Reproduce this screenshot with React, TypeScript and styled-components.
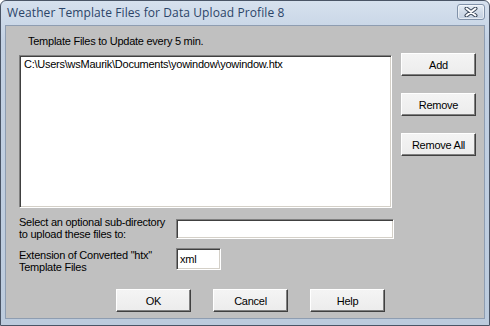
import React from 'react';
import styled, { createGlobalStyle } from 'styled-components';

const GlobalStyle = createGlobalStyle`
  html, body {
    margin: 0;
    padding: 0;
    background: #ffffff;
  }
`;

const Window = styled.div`
  width: 490px;
  height: 326px;
  box-sizing: border-box;
  display: flex;
  flex-direction: column;
  border: 1px solid #4a5566;
  border-radius: 6px 6px 0 0;
  background: linear-gradient(#d6e1ee, #c3d1e3 40px, #bccbdd);
  overflow: hidden;
`;

const TitleBar = styled.div`
  height: 24px;
  flex-shrink: 0;
  display: flex;
  align-items: center;
  justify-content: space-between;
  padding: 0 4px 0 6px;
`;

const Title = styled.span`
  font-family: 'Open Sans', 'Noto Sans', sans-serif;
  font-size: 12px;
  letter-spacing: 0.1px;
  color: #2b4468;
  margin-top: -1px;
`;

const CloseButton = styled.div`
  width: 28px;
  height: 16px;
  box-sizing: border-box;
  margin-top: -2px;
  border: 1px solid #8192a9;
  border-radius: 3px;
  background: linear-gradient(#e6edf5, #cfdae7 55%, #c5d2e2);
  box-shadow: inset 0 0 0 1px rgba(255, 255, 255, 0.55);
  display: flex;
  align-items: center;
  justify-content: center;
`;

const Client = styled.div`
  flex: 1;
  margin: 0 4px 6px 4px;
  border: 1px solid #8e9db1;
  background: #c0c0c0;
  font-family: 'Liberation Sans', Arial, sans-serif;
  font-size: 11px;
  letter-spacing: -0.25px;
  color: #000000;
  display: flex;
  flex-direction: column;
`;

const Caption = styled.div`
  line-height: 13px;
  padding: 9px 0 0 22px;
`;

const MainRow = styled.div`
  display: flex;
  align-items: flex-start;
  margin: 7px 0 0 13px;
`;

const sunken = `
  box-sizing: border-box;
  background: #ffffff;
  border-style: solid;
  border-width: 1px;
  border-color: #808080 #ffffff #ffffff #808080;
  box-shadow: inset 1px 1px 0 #404040, inset -1px -1px 0 #d4d0c8;
`;

const ListBox = styled.div`
  ${sunken}
  width: 373px;
  height: 153px;
  padding: 2px 0 0 4px;
  line-height: 13px;
`;

const SideButtons = styled.div`
  display: flex;
  flex-direction: column;
  gap: 17px;
  margin: -2px 0 0 9px;
`;

const Button = styled.button`
  width: 75px;
  height: 23px;
  box-sizing: border-box;
  padding: 0;
  font-family: 'Liberation Sans', Arial, sans-serif;
  font-size: 11px;
  letter-spacing: -0.25px;
  color: #000000;
  background: linear-gradient(#f4f4f4, #ececec);
  border-style: solid;
  border-width: 1px;
  border-color: #ffffff #404040 #404040 #ffffff;
  box-shadow: inset -1px -1px 0 #808080;
  border-radius: 0;
`;

const FormRow = styled.div<{ $top: number }>`
  display: flex;
  align-items: flex-start;
  margin: ${(p) => p.$top}px 0 0 13px;
`;

const FieldLabel = styled.div<{ $pad: number }>`
  width: 157px;
  line-height: 12px;
  padding-top: ${(p) => p.$pad}px;
`;

const TextField = styled.div<{ $w: number; $h: number; $lift: number }>`
  ${sunken}
  width: ${(p) => p.$w}px;
  height: ${(p) => p.$h}px;
  margin-top: ${(p) => p.$lift}px;
  padding: 3px 0 0 3px;
  line-height: 14px;
`;

const ButtonRow = styled.div`
  display: flex;
  gap: 22px;
  margin: 16px 0 0 110px;
`;

const CloseGlyph = () => (
  <svg width="14" height="10" viewBox="0 0 14 10">
    <path d="M2.5 1.5 L11.5 8.5 M11.5 1.5 L2.5 8.5" stroke="#3d4a5c" strokeWidth="4" strokeLinecap="round" />
    <path d="M2.5 1.5 L11.5 8.5 M11.5 1.5 L2.5 8.5" stroke="#ffffff" strokeWidth="2" strokeLinecap="round" />
  </svg>
);

const App: React.FC = () => {
  return (
    <>
      <GlobalStyle />
      <Window>
        <TitleBar>
          <Title>Weather Template Files for Data Upload Profile 8</Title>
          <CloseButton>
            <CloseGlyph />
          </CloseButton>
        </TitleBar>
        <Client>
          <Caption>Template Files to Update every 5 min.</Caption>
          <MainRow>
            <ListBox>C:\Users\wsMaurik\Documents\yowindow\yowindow.htx</ListBox>
            <SideButtons>
              <Button>Add</Button>
              <Button>Remove</Button>
              <Button>Remove All</Button>
            </SideButtons>
          </MainRow>
          <FormRow $top={8}>
            <FieldLabel $pad={0}>
              Select an optional sub-directory
              <br />
              to upload these files to:
            </FieldLabel>
            <TextField $w={218} $h={20} $lift={3} />
          </FormRow>
          <FormRow $top={8}>
            <FieldLabel $pad={1}>
              Extension of Converted &quot;htx&quot;
              <br />
              Template Files
            </FieldLabel>
            <TextField $w={45} $h={22} $lift={0}>xml</TextField>
          </FormRow>
          <ButtonRow>
            <Button>OK</Button>
            <Button>Cancel</Button>
            <Button>Help</Button>
          </ButtonRow>
        </Client>
      </Window>
    </>
  );
};

export default App;
